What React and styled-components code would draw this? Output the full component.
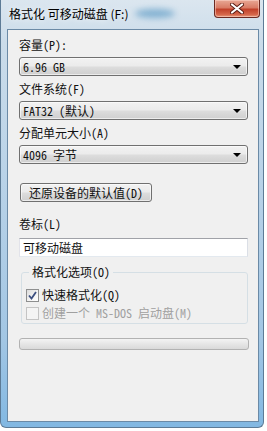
import React from 'react';
import styled, { createGlobalStyle } from 'styled-components';

const GlobalStyle = createGlobalStyle`
    html, body {
        margin: 0;
        padding: 0;
        background: #ffffff;
    }
    body {
        font-family: "Noto Sans Mono CJK SC", "Noto Sans CJK SC", monospace;
        font-size: 12px;
        color: #111;
    }
`;

const Window = styled.div`
    position: relative;
    width: 264px;
    height: 428px;
    box-sizing: border-box;
    display: flex;
    flex-direction: column;
    padding: 0 4px 5px 6px;
    border: 1px solid #5d7b96;
    border-top: none;
    border-radius: 0 0 6px 6px;
    background: linear-gradient(to bottom, #dbe6ef 0%, #cbdcea 10%, #bad3e8 40%, #a2c6e4 80%, #82b8e2 100%);
    overflow: hidden;
`;

const TitleBar = styled.div`
    position: relative;
    height: 29px;
    display: flex;
    align-items: flex-start;
    padding-left: 2px;
`;

const TitleText = styled.div`
    font-family: "Noto Sans CJK SC", sans-serif;
    font-size: 12px;
    line-height: 14px;
    margin-top: 7px;
    color: #000;
    text-shadow: 0 0 6px rgba(255, 255, 255, 0.9);
`;

const Glow = styled.div`
    position: absolute;
    left: 128px;
    top: 9px;
    width: 40px;
    height: 9px;
    border-radius: 50%;
    background: #5f9cc6;
    filter: blur(3px);
    opacity: 0.7;
`;

const CloseButton = styled.div`
    position: absolute;
    top: 0;
    right: -1px;
    width: 46px;
    height: 18px;
    box-sizing: border-box;
    border: 1px solid #6b2a22;
    border-top: none;
    border-radius: 0 0 4px 4px;
    background: linear-gradient(to bottom, #e8a895 0%, #d97c66 45%, #c1412a 55%, #d5664a 85%, #e79a7c 100%);
    display: flex;
    align-items: center;
    justify-content: center;
    box-shadow: inset 0 0 0 1px rgba(255, 220, 210, 0.5);
`;

const Client = styled.div`
    flex: 1;
    background: #f0f0f0;
    border: 1px solid #6b8aa6;
    display: flex;
    flex-direction: column;
    padding: 8px 10px 0 11px;
`;

const Label = styled.div`
    height: 14px;
    line-height: 14px;
    margin-bottom: ${p => p.$gap || 5}px;
    white-space: nowrap;
`;

const Combo = styled.div`
    height: 19px;
    box-sizing: border-box;
    border: 1px solid #707070;
    border-radius: 3px;
    background: linear-gradient(to bottom, #f2f2f2 0%, #ebebeb 48%, #dddddd 52%, #cfcfcf 100%);
    display: flex;
    align-items: center;
    padding: 0 6px 0 3px;
    margin-bottom: 6px;
    box-shadow: inset 0 0 0 1px rgba(255, 255, 255, 0.6);
`;

const ComboText = styled.span`
    flex: 1;
    line-height: 14px;
    white-space: nowrap;
`;

const Arrow = styled.span`
    width: 0;
    height: 0;
    border-left: 4px solid transparent;
    border-right: 4px solid transparent;
    border-top: 4px solid #000;
    margin-top: 1px;
`;

const Button = styled.div`
    align-self: flex-start;
    width: 132px;
    height: 19px;
    box-sizing: border-box;
    margin-left: 1px;
    margin-top: 13px;
    margin-bottom: 15px;
    border: 1px solid #707070;
    border-radius: 3px;
    background: linear-gradient(to bottom, #f2f2f2 0%, #ebebeb 48%, #dddddd 52%, #cfcfcf 100%);
    display: flex;
    align-items: center;
    justify-content: center;
    line-height: 14px;
    white-space: nowrap;
    box-shadow: inset 0 0 0 1px rgba(255, 255, 255, 0.6);
`;

const TextBox = styled.div`
    height: 19px;
    box-sizing: border-box;
    border: 1px solid #abadb3;
    border-top-color: #a0a2a8;
    border-left-color: #e2e3ea;
    border-right-color: #dbdfe6;
    border-bottom-color: #e3e9ef;
    background: #fff;
    display: flex;
    align-items: center;
    padding-left: 3px;
    line-height: 14px;
    margin-bottom: 8px;
`;

const GroupBox = styled.fieldset`
    margin: 0 0 0 2px;
    padding: 9px 0 3px 4px;
    border: 1px solid #d5dfe5;
    border-radius: 3px;
    display: flex;
    flex-direction: column;
    gap: 4px;
`;

const Legend = styled.legend`
    padding: 0 3px;
    margin-left: 3px;
    line-height: 14px;
`;

const CheckRow = styled.div`
    display: flex;
    align-items: center;
    gap: 3px;
    height: 14px;
    line-height: 14px;
    color: ${p => (p.$disabled ? '#a0a0a0' : 'inherit')};
    white-space: nowrap;
`;

const Box = styled.span`
    width: 13px;
    height: 13px;
    box-sizing: border-box;
    border: 1px solid ${p => (p.$disabled ? '#c4c4c4' : '#8e8f8f')};
    background: ${p => (p.$disabled
        ? '#f4f4f4'
        : 'linear-gradient(135deg, #dcdcdc 0%, #f5f5f5 60%, #ffffff 100%)')};
    display: flex;
    align-items: center;
    justify-content: center;
`;

const Progress = styled.div`
    height: 12px;
    box-sizing: border-box;
    margin-top: 14px;
    margin-right: -1px;
    border: 1px solid #b2b2b2;
    border-radius: 3px;
    background: linear-gradient(to bottom, #f3f3f3 0%, #e6e6e6 50%, #d9d9d9 100%);
`;

const fields = [
    { label: '容量(P):', value: '6.96 GB' },
    { label: '文件系统(F)', value: 'FAT32 (默认)' },
    { label: '分配单元大小(A)', value: '4096 字节' },
];

const App = () => {
    return (
        <>
            <GlobalStyle />
            <Window>
                <TitleBar>
                    <TitleText>格式化 可移动磁盘 (F:)</TitleText>
                    <Glow />
                    <CloseButton>
                        <svg width="14" height="11" viewBox="0 0 14 11">
                            <path d="M2 1.5 L12 9.5 M12 1.5 L2 9.5" stroke="#5a1d14" strokeWidth="4" strokeLinecap="round" />
                            <path d="M2 1.5 L12 9.5 M12 1.5 L2 9.5" stroke="#ffffff" strokeWidth="2.2" strokeLinecap="round" />
                        </svg>
                    </CloseButton>
                </TitleBar>
                <Client>
                    {fields.map((f, i) => (
                        <React.Fragment key={i}>
                            <Label>{f.label}</Label>
                            <Combo>
                                <ComboText>{f.value}</ComboText>
                                <Arrow />
                            </Combo>
                        </React.Fragment>
                    ))}
                    <Button>还原设备的默认值(D)</Button>
                    <Label $gap={7}>卷标(L)</Label>
                    <TextBox>可移动磁盘</TextBox>
                    <GroupBox>
                        <Legend>格式化选项(O)</Legend>
                        <CheckRow>
                            <Box>
                                <svg width="9" height="9" viewBox="0 0 9 9">
                                    <path d="M1 4.5 L3.5 7.5 L8 1" fill="none" stroke="#3c4f80" strokeWidth="1.8" />
                                </svg>
                            </Box>
                            快速格式化(Q)
                        </CheckRow>
                        <CheckRow $disabled>
                            <Box $disabled />
                            创建一个 MS-DOS 启动盘(M)
                        </CheckRow>
                    </GroupBox>
                    <Progress />
                </Client>
            </Window>
        </>
    );
};

export default App;
